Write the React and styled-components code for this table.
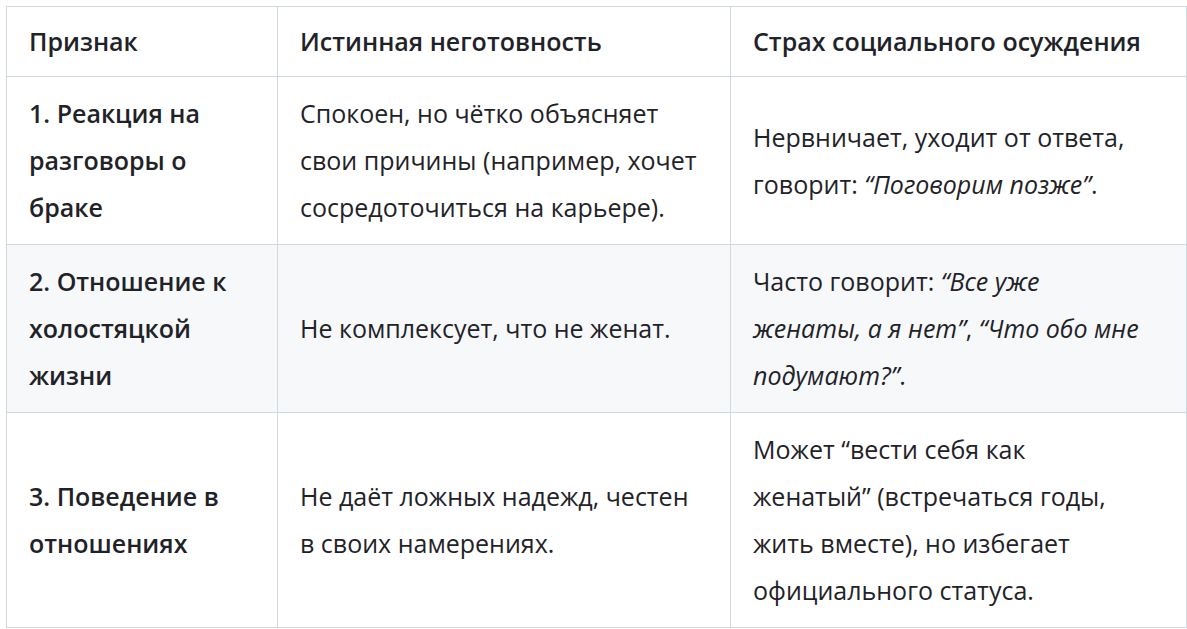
import React from "react";
import styled, { createGlobalStyle } from "styled-components";

const Global = createGlobalStyle`
  html, body { margin: 0; padding: 0; background: #ffffff; }
  body { font-family: "Open Sans", "Noto Sans", sans-serif; color: #1f2328; }
`;

const Page = styled.div`
  padding: 6px 0 0 6px;
`;

const Table = styled.table`
  border-collapse: collapse;
  border-spacing: 0;
  width: 1180px;
  table-layout: fixed;
  font-size: 25px;
  line-height: 47px;
`;

const Col = styled.col`
  width: ${(p) => p.$w}px;
`;

const Row = styled.tr`
  background: ${(p) => (p.$alt ? "#f6f8fa" : "#ffffff")};
`;

const Th = styled.th`
  border: 1px solid #d1d9e0;
  padding: 11px 22px;
  text-align: left;
  font-weight: 600;
  vertical-align: middle;
`;

const Td = styled.td`
  border: 1px solid #d1d9e0;
  padding: 13px 22px;
  vertical-align: middle;
  font-weight: ${(p) => (p.$bold ? 600 : 400)};
`;

const Quote = styled.em`
  font-style: italic;
`;

const rows = [
  {
    k: "1. Реакция на разговоры о браке",
    a: "Спокоен, но чётко объясняет свои причины (например, хочет сосредоточиться на карьере).",
    b: (
      <>
        Нервничает, уходит от ответа, говорит: <Quote>“Поговорим позже”</Quote>.
      </>
    ),
  },
  {
    k: "2. Отношение к холостяцкой жизни",
    a: "Не комплексует, что не женат.",
    b: (
      <>
        Часто говорит: <Quote>“Все уже<br />женаты, а я нет”</Quote>, <Quote>“Что обо мне<br />подумают?”</Quote>.
      </>
    ),
  },
  {
    k: "3. Поведение в отношениях",
    a: "Не даёт ложных надежд, честен в своих намерениях.",
    b: (
      <>
        Может “вести себя как<br />женатый” (встречаться годы,<br />жить вместе), но избегает<br />официального статуса.
      </>
    ),
  },
];

export default function App() {
  return (
    <Page>
      <Global />
      <Table>
        <colgroup>
          <Col $w={271} />
          <Col $w={453} />
          <Col $w={456} />
        </colgroup>
        <thead>
          <Row>
            <Th>Признак</Th>
            <Th>Истинная неготовность</Th>
            <Th>Страх социального осуждения</Th>
          </Row>
        </thead>
        <tbody>
          {rows.map((r, i) => (
            <Row key={i} $alt={i % 2 === 1}>
              <Td $bold>{r.k}</Td>
              <Td>{r.a}</Td>
              <Td>{r.b}</Td>
            </Row>
          ))}
        </tbody>
      </Table>
    </Page>
  );
}
